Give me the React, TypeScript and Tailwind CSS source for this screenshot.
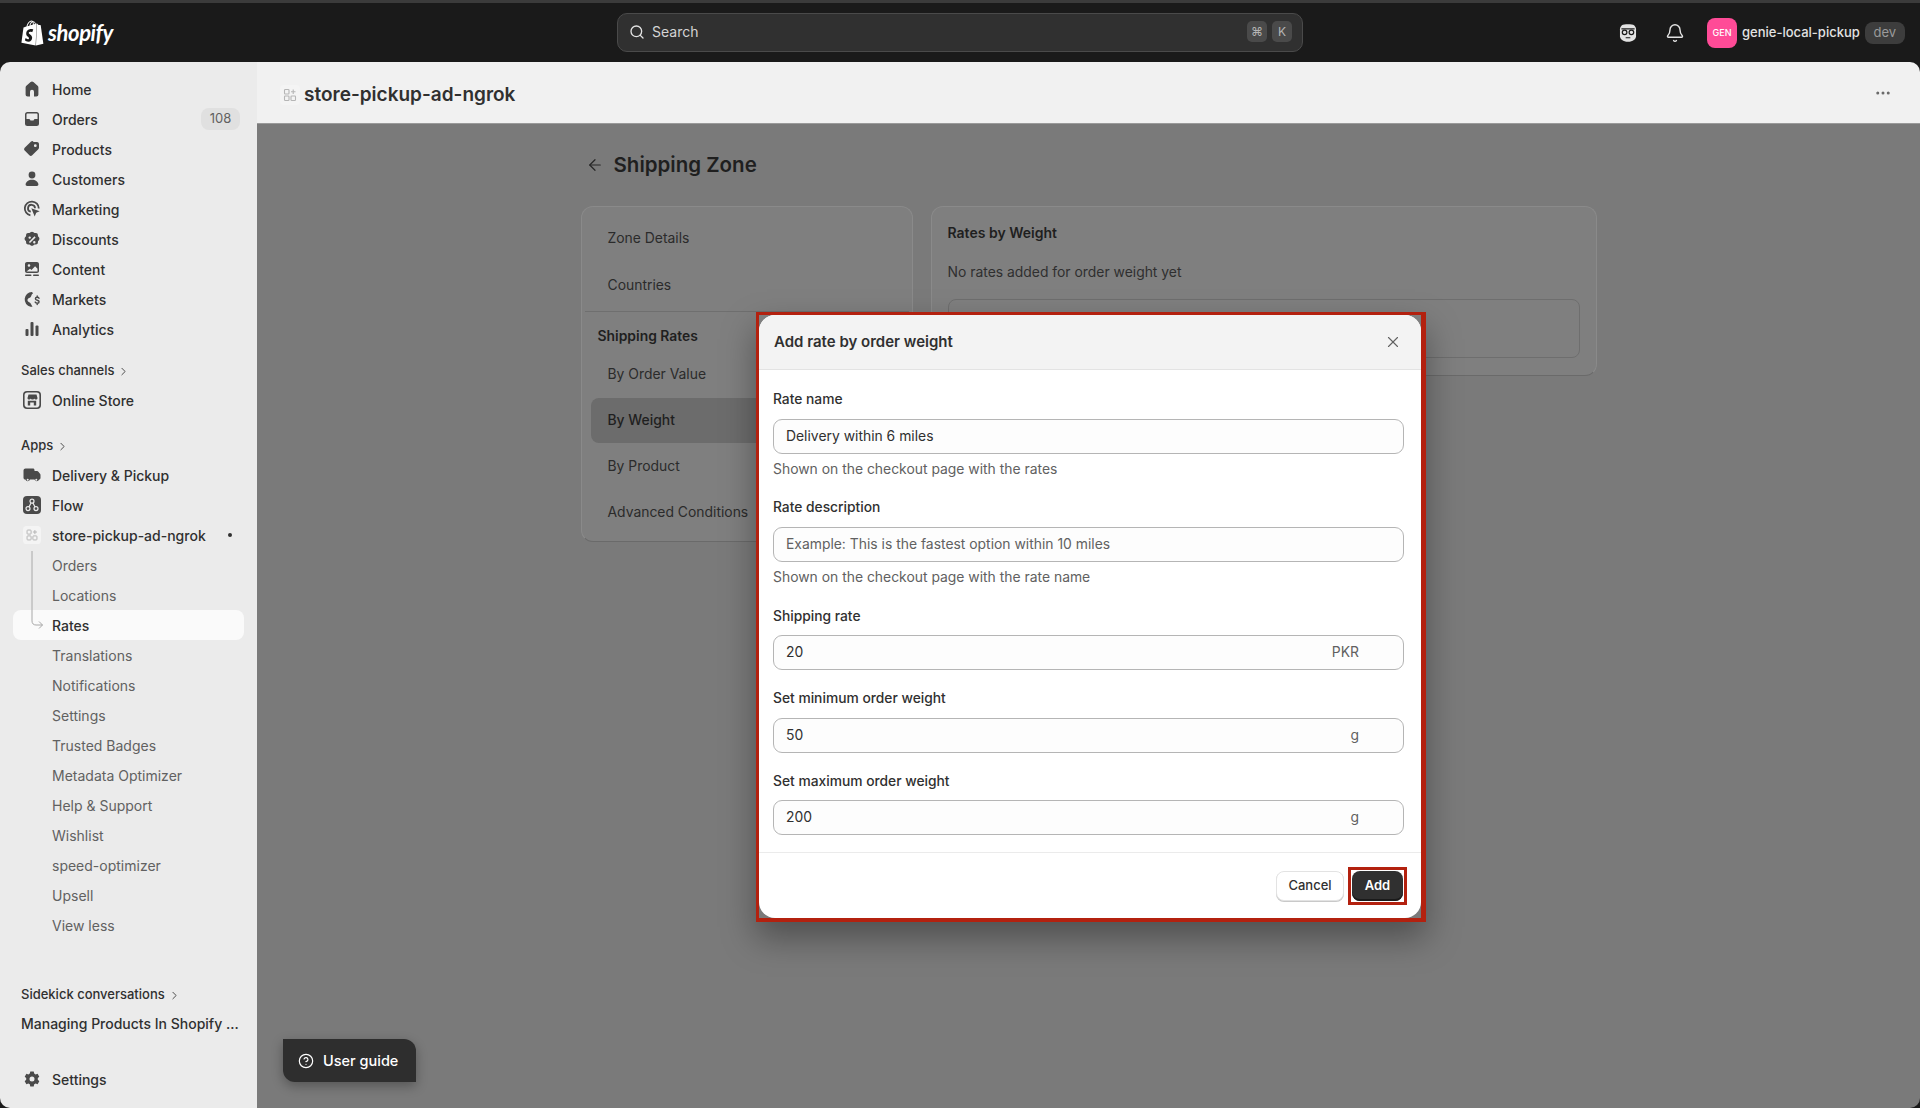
import React from 'react';
import { ArrowLeft, Bell, ChevronRight, CircleHelp, MoreHorizontal, Search, X } from 'lucide-react';
import { SiShopify } from 'react-icons/si';

type IconProps = { className?: string };

const HomeIcon = ({ className }: IconProps) => (
  <svg viewBox="0 0 20 20" fill="currentColor" className={className}>
    <path d="M10 2.600c-.5 0-1 .2-1.400.5L4.400 6.700C3.900 7.100 3.600 7.800 3.600 8.500v6.900c0 1.100.9 2 2 2H8v-4.600a2 2 0 0 1 4 0v4.600h2.400c1.100 0 2-.9 2-2V8.500c0-.7-.3-1.400-.8-1.800l-4.200-3.600c-.4-.3-.9-.5-1.400-.5Z" />
  </svg>
);
const OrdersIcon = ({ className }: IconProps) => (
  <svg viewBox="0 0 20 20" fill="currentColor" className={className}>
    <path fillRule="evenodd" d="M5.500 3h9A2.500 2.500 0 0 1 17 5.500v9a2.500 2.500 0 0 1-2.500 2.500h-9A2.500 2.500 0 0 1 3 14.500v-9A2.500 2.500 0 0 1 5.500 3Zm0 1.500a1 1 0 0 0-1 1V10h2.600c.5 0 .8.3 1 .7l.4.9h3l.4-.9c.2-.4.5-.7 1-.7h2.600V5.500a1 1 0 0 0-1-1h-9Z" />
  </svg>
);
const ProductsIcon = ({ className }: IconProps) => (
  <svg viewBox="0 0 20 20" fill="currentColor" className={className}>
    <path fillRule="evenodd" d="M11.600 3H15c1.100 0 2 .9 2 2v3.400c0 .7-.3 1.300-.7 1.800l-6.100 6.100c-.8.8-2 .8-2.800 0l-4.700-4.700c-.8-.8-.8-2 0-2.800l6.100-6.100c.5-.5 1.100-.7 1.800-.7Zm1.700 5.100a1.400 1.400 0 1 0 0-2.800 1.400 1.400 0 0 0 0 2.800Z" />
  </svg>
);
const CustomersIcon = ({ className }: IconProps) => (
  <svg viewBox="0 0 20 20" fill="currentColor" className={className}>
    <circle cx="10" cy="6" r="3.400" />
    <path d="M10 10.800c-3.400 0-6 1.800-6.400 4.500-.1.900.6 1.700 1.500 1.700h9.800c.9 0 1.600-.8 1.500-1.700-.4-2.700-3-4.500-6.400-4.500Z" />
  </svg>
);
const MarketingIcon = ({ className }: IconProps) => (
  <svg viewBox="0 0 20 20" fill="none" stroke="currentColor" className={className}>
    <path strokeWidth="1.800" d="M8.400 16.400A7 7 0 1 1 16.800 9.500" />
    <path strokeWidth="1.800" d="M8.800 12.700a3.500 3.500 0 1 1 4.200-3.400" />
    <path fill="currentColor" stroke="none" d="M9.300 9.300l8.400 3-3.500 1.500-1.500 3.700-3.400-8.200Z" />
  </svg>
);
const DiscountsIcon = ({ className }: IconProps) => (
  <svg viewBox="0 0 20 20" fill="currentColor" className={className}>
    <path fillRule="evenodd" d="M8.500 2.400c.9-.7 2.100-.7 3 0l1 .8 1.300-.1c1.200-.1 2.100.9 2.100 2l.1 1.300.9 1c.7.900.7 2.100 0 3l-.9 1-.1 1.300c0 1.100-.9 2.100-2.100 2l-1.300-.1-1 .8c-.9.7-2.100.7-3 0l-1-.8-1.300.1c-1.200.1-2.100-.9-2.100-2l-.1-1.300-.9-1c-.7-.9-.7-2.100 0-3l.9-1 .1-1.300c0-1.100.9-2.100 2.100-2l1.300.1 1-.8ZM12.500 6.400l-5.600 5.600 1.100 1.100 5.600-5.600-1.100-1.100ZM7.700 8.900a1.200 1.200 0 1 0 0-2.400 1.200 1.200 0 0 0 0 2.400Zm4.600 4.600a1.200 1.200 0 1 0 0-2.400 1.200 1.200 0 0 0 0 2.400Z" transform="translate(0 .9)" />
  </svg>
);
const ContentIcon = ({ className }: IconProps) => (
  <svg viewBox="0 0 20 20" fill="currentColor" className={className}>
    <path fillRule="evenodd" d="M5 3h10c1.100 0 2 .9 2 2v7c0 1.100-.9 2-2 2H5c-1.100 0-2-.9-2-2V5c0-1.100.9-2 2-2Zm2 2.200a1.300 1.300 0 1 0 0 2.600 1.300 1.300 0 0 0 0-2.600Zm-2.500 7.300h11V9.800l-2.400-2.500-3.600 3.700-1.500-1.300-3.500 2.800Z" />
    <rect x="3" y="15.500" width="6.500" height="1.500" rx=".7" />
    <rect x="11" y="15.500" width="6" height="1.500" rx=".7" />
  </svg>
);
const MarketsIcon = ({ className }: IconProps) => (
  <svg viewBox="0 0 20 20" fill="currentColor" className={className}>
    <path d="M9.800 3a7.500 7.500 0 0 0-1.300 14.800c.6.100 1.300.1 2-.1-.8-1-1.200-2.200-1.800-3.200-.7-1.100-2.300-1.300-3-2.500-.6-1.200.2-2.500 1.300-3 1.200-.6 2-.9 2.300-2.300.2-1 .8-1.900 1.800-2.500-.5-.7-1.500-1.200-1.300-1.200Z" />
    <path fill="none" stroke="currentColor" strokeWidth="1.400" strokeLinecap="round" d="M17 9.300c-.3-.7-1-1-1.800-1-1.100 0-1.800.6-1.800 1.400 0 2 3.700 1 3.700 3 0 .9-.8 1.500-1.900 1.500-.9 0-1.600-.4-2-1.100M15.200 7v1.300M15.200 14.200v1.300" />
  </svg>
);
const AnalyticsIcon = ({ className }: IconProps) => (
  <svg viewBox="0 0 20 20" fill="currentColor" className={className}>
    <rect x="3.500" y="10" width="3" height="7" rx="1" />
    <rect x="8.500" y="3" width="3" height="14" rx="1" />
    <rect x="13.500" y="6.500" width="3" height="10.500" rx="1" />
  </svg>
);
const StoreIcon = ({ className }: IconProps) => (
  <svg viewBox="0 0 20 20" className={className}>
    <rect x="1" y="1" width="18" height="18" rx="4" fill="#4a4a4a" />
    <rect x="2.600" y="2.600" width="14.800" height="14.800" rx="2.800" fill="#ebebeb" />
    <path fill="#4a4a4a" d="M5.500 4.500h9l1 3.500c0 1-.8 1.500-1.600 1.500-.7 0-1.400-.4-1.600-1-.2.6-.9 1-1.800 1s-1.600-.4-1.800-1c-.2.6-.9 1-1.600 1-.8 0-1.600-.5-1.600-1.500l1-3.500ZM5.800 10.800h8.400v4.700h-2.400v-3h-3.600v3H5.800v-4.700Z" />
  </svg>
);
const TruckIcon = ({ className }: IconProps) => (
  <svg viewBox="0 0 20 20" fill="currentColor" className={className}>
    <path fillRule="evenodd" d="M1.500 5.500C1.500 4.400 2.400 3.500 3.500 3.500h7.500c.8 0 1.500.7 1.500 1.500v1H15c.6 0 1.100.3 1.400.8l1.800 2.100c.2.300.3.600.3 1v3.100c0 .8-.6 1.500-1.400 1.500a2.400 2.400 0 0 1-4.600 0H8a2.400 2.400 0 0 1-4.600 0c-1.100 0-1.900-.7-1.900-1.500V5.500Zm4.200 10.300a1 1 0 1 0 0-2 1 1 0 0 0 0 2Zm8.600 0a1 1 0 1 0 0-2 1 1 0 0 0 0 2Z" />
  </svg>
);
const FlowIcon = ({ className }: IconProps) => (
  <svg viewBox="0 0 20 20" className={className}>
    <rect x="1" y="1" width="18" height="18" rx="4" fill="#4a4a4a" />
    <g fill="none" stroke="#ebebeb" strokeWidth="1.200">
      <circle cx="10" cy="6.200" r="2" />
      <circle cx="6" cy="13.600" r="2" />
      <circle cx="14" cy="13.600" r="2" />
      <path d="M9 8 7 11.900M11 8l2 3.900" />
    </g>
  </svg>
);
const AppTile = ({ className }: IconProps) => (
  <svg viewBox="0 0 20 20" className={className}>
    <rect width="20" height="20" rx="4" fill="#f4f4f4" />
    <g fill="none" stroke="#b5b5b5" strokeWidth="1.100">
      <rect x="4.500" y="4.500" width="4.500" height="4.500" rx=".8" />
      <rect x="4.500" y="11" width="4.500" height="4.500" rx=".8" />
      <rect x="11" y="11" width="4.500" height="4.500" rx=".8" />
      <path d="M13.200 4.500v4.500M11 6.700h4.500" />
    </g>
  </svg>
);
const GearIcon = ({ className }: IconProps) => (
  <svg viewBox="0 0 20 20" fill="currentColor" className={className}>
    <path fillRule="evenodd" d="M8.300 2.500h3.400l.5 2.100 1.400.8 2-.7 1.700 3-1.500 1.400v1.700l1.500 1.400-1.700 3-2-.7-1.400.8-.5 2.100H8.300l-.5-2.100-1.400-.8-2 .7-1.700-3 1.500-1.400V9.000L2.700 7.700l1.700-3 2 .7 1.400-.8.500-2.100ZM10 12.400a2.500 2.500 0 1 0 0-5 2.500 2.500 0 0 0 0 5Z" />
  </svg>
);
const SidekickIcon = ({ className }: IconProps) => (
  <svg viewBox="0 0 20 20" className={className}>
    <path fill="#e3e3e3" d="M4.500 3C6 1.800 14 1.800 15.500 3c.9.800 1.800 2 1.800 3.500v6.500c0 2.700-2.800 5-7.300 5s-7.300-2.300-7.300-5V6.500C2.700 5 3.600 3.800 4.500 3Z" />
    <path fill="#1a1a1a" d="M4 5.700h12v1.100H4z" />
    <circle cx="6.900" cy="9.400" r="2.100" fill="#e3e3e3" stroke="#1a1a1a" strokeWidth="1.100" />
    <circle cx="13.100" cy="9.400" r="2.100" fill="#e3e3e3" stroke="#1a1a1a" strokeWidth="1.100" />
    <path d="M8.300 14.300h3.400" stroke="#1a1a1a" strokeWidth="1.100" strokeLinecap="round" />
  </svg>
);

const mainNav = [
  { label: 'Home', icon: HomeIcon },
  { label: 'Orders', icon: OrdersIcon, badge: '108' },
  { label: 'Products', icon: ProductsIcon },
  { label: 'Customers', icon: CustomersIcon },
  { label: 'Marketing', icon: MarketingIcon },
  { label: 'Discounts', icon: DiscountsIcon },
  { label: 'Content', icon: ContentIcon },
  { label: 'Markets', icon: MarketsIcon },
  { label: 'Analytics', icon: AnalyticsIcon },
];

const subNav = [
  'Orders',
  'Locations',
  'Rates',
  'Translations',
  'Notifications',
  'Settings',
  'Trusted Badges',
  'Metadata Optimizer',
  'Help & Support',
  'Wishlist',
  'speed-optimizer',
  'Upsell',
  'View less',
];

const NavRow = ({ label, icon: Icon, badge }: { label: string; icon: React.FC<IconProps>; badge?: string }) => (
  <div className="mx-[13px] flex h-[30px] items-center rounded-lg pl-[9px] pr-[4px] text-[14px] font-medium text-[#303030]">
    <Icon className="mr-[10px] h-[20px] w-[20px] shrink-0 text-[#4a4a4a]" />
    <span>{label}</span>
    {badge && (
      <span className="ml-auto flex h-[22px] w-[39px] items-center justify-center rounded-lg bg-[#e0e0e0] text-[13px] font-normal text-[#616161]">
        {badge}
      </span>
    )}
  </div>
);

const SectionLabel = ({ label, className }: { label: string; className: string }) => (
  <div className={`flex h-[30px] items-center pl-[21px] text-[13px] font-medium text-[#303030] ${className}`}>
    {label}
    <ChevronRight className="ml-[3px] h-[13px] w-[13px] text-[#4a4a4a]" strokeWidth={1.8} />
  </div>
);

const Sidebar = () => (
  <aside className="flex w-[257px] shrink-0 flex-col bg-[#ebebeb] pt-[12px]">
    {mainNav.map((item) => (
      <NavRow key={item.label} {...item} />
    ))}
    <SectionLabel label="Sales channels" className="mt-[10px] pt-[4px]" />
    <div className="mt-px">
      <NavRow label="Online Store" icon={StoreIcon} />
    </div>
    <SectionLabel label="Apps" className="mt-[15px] pt-[2px]" />
    <NavRow label="Delivery & Pickup" icon={TruckIcon} />
    <NavRow label="Flow" icon={FlowIcon} />
    <div className="mx-[13px] flex h-[30px] items-center pl-[10px] text-[14px] font-medium text-[#303030]">
      <AppTile className="mr-[11px] h-[18px] w-[18px] shrink-0" />
      <span>store-pickup-ad-ngrok</span>
      <span className="ml-[22px] h-1 w-1 rounded-full bg-[#303030]" />
    </div>
    <div className="relative">
      <svg viewBox="0 0 14 80" fill="none" className="absolute left-[31px] top-0 h-[80px] w-[14px] text-[#a8a8a8]">
        <path d="M1 1v70c0 2.500 1.500 4 4 4h6.500M8 71.500l3.500 3.500L8 78.500" stroke="currentColor" strokeWidth="1" />
      </svg>
      {subNav.map((label) => (
        <div
          key={label}
          className={
            label === 'Rates'
              ? 'mx-[13px] flex h-[30px] items-center rounded-lg bg-[#fafafa] pl-[39px] text-[14px] font-medium text-[#303030]'
              : 'mx-[13px] flex h-[30px] items-center pl-[39px] text-[14px] text-[#616161]'
          }
        >
          {label}
        </div>
      ))}
    </div>
    <SectionLabel label="Sidekick conversations" className="mt-[38px] pt-[4px]" />
    <div className="flex h-[30px] items-center whitespace-nowrap pl-[21px] text-[14px] font-medium text-[#303030]">
      Managing Products In Shopify ...
    </div>
    <div className="mt-[26px]">
      <NavRow label="Settings" icon={GearIcon} />
    </div>
  </aside>
);

const TopBar = () => (
  <header className="flex h-[62px] shrink-0 items-center border-t-[3px] border-[#3b3b3b] bg-[#1a1a1a] pl-[20px]">
    <div className="flex w-[597px] shrink-0 items-center text-white">
      <SiShopify className="h-[28px] w-[25px]" />
      <span className="ml-[3px] font-['Lato',sans-serif] text-[22px] font-bold italic leading-none tracking-[-0.4px]">shopify</span>
    </div>
    <div className="flex h-[39px] w-[686px] shrink-0 items-center rounded-[10px] border border-[#4a4a4a] bg-[#303030] pb-[2px] pl-[11px] pr-[10px] text-[14px] text-[#d4d4d4]">
      <Search className="mr-[7px] h-[16px] w-[16px] text-[#e3e3e3]" strokeWidth={2} />
      Search
      <span className="ml-auto flex items-center gap-[5px] text-[12px] text-[#b5b5b5]">
        <span className="flex h-[21px] w-[20px] items-center justify-center rounded-[5px] bg-[#4a4a4a]">⌘</span>
        <span className="flex h-[21px] w-[20px] items-center justify-center rounded-[5px] bg-[#4a4a4a]">K</span>
      </span>
    </div>
    <SidekickIcon className="ml-[314px] h-[22px] w-[22px] shrink-0" />
    <Bell className="ml-[26px] h-[20px] w-[20px] shrink-0 text-[#e3e3e3]" strokeWidth={1.7} />
    <div className="ml-[22px] flex h-[30px] w-[30px] shrink-0 items-center justify-center rounded-lg bg-[#ff4b97] text-[9px] font-medium text-white">
      GEN
    </div>
    <span className="ml-[5px] shrink-0 whitespace-nowrap text-[13px] font-medium text-[#e3e3e3]">genie-local-pickup</span>
    <span className="ml-[5px] flex h-[22px] w-[40px] shrink-0 items-center justify-center rounded-lg bg-[#3d3d3d] text-[13px] text-[#9a9a9a]">dev</span>
  </header>
);

const ZoneMenuItem = ({ label, active }: { label: string; active?: boolean }) => (
  <div
    className={
      active
        ? 'mt-px flex h-[45px] items-center rounded-lg bg-[#6c6c6c] pl-[17px] text-[13.9px] font-medium text-[#1f1f1f]'
        : 'flex h-[46px] items-center pl-[17px] text-[13.9px] text-[#2b2b2b]'
    }
  >
    {label}
  </div>
);

const MainContent = () => (
  <main className="flex min-w-0 flex-1 flex-col">
    <div className="flex h-[62px] shrink-0 items-center justify-between border-b border-[#9a9a9a] bg-[#f1f1f1] pl-[23px] pr-[28px]">
      <div className="flex items-center pt-[5px]">
        <AppTile className="h-[20px] w-[20px]" />
        <span className="ml-[4px] text-[19px] font-semibold text-[#303030]">store-pickup-ad-ngrok</span>
      </div>
      <MoreHorizontal className="h-[18px] w-[18px] text-[#6b6b6b]" />
    </div>
    <div className="flex-1 bg-[#7a7a7a]">
      <div className="mx-auto w-[1016px]">
        <div className="flex h-[82px] items-center pl-[5px]">
          <ArrowLeft className="h-[18px] w-[18px] text-[#262626]" strokeWidth={1.6} />
          <h1 className="ml-[10px] text-[20.5px] font-semibold text-[#1f1f1f]">Shipping Zone</h1>
        </div>
        <div className="flex items-start gap-[18px]">
          <div className="w-[332px] rounded-xl border border-[#8a8a8a] border-b-[#6a6a6a] bg-[#7f7f7f] px-[9px] pb-[6px] pt-[8px]">
            <ZoneMenuItem label="Zone Details" />
            <div className="mt-px">
              <ZoneMenuItem label="Countries" />
            </div>
            <div className="mx-[-6px] mt-[3px] border-t border-[#6f6f6f]" />
            <div className="flex h-[39px] items-center pl-[7px] pt-[10px] text-[13.9px] font-semibold text-[#1f1f1f]">Shipping Rates</div>
            <ZoneMenuItem label="By Order Value" />
            <ZoneMenuItem label="By Weight" active />
            <ZoneMenuItem label="By Product" />
            <ZoneMenuItem label="Advanced Conditions" />
          </div>
          <div className="h-[170px] flex-1 rounded-xl border border-[#8a8a8a] border-b-[#6a6a6a] bg-[#7f7f7f] px-[16px] pt-[16px]">
            <h2 className="text-[14px] font-semibold leading-[20px] text-[#1f1f1f]">Rates by Weight</h2>
            <p className="mt-[19px] text-[13.9px] leading-[20px] text-[#2f2f2f]">No rates added for order weight yet</p>
            <div className="mt-[17px] h-[59px] rounded-lg border border-[#6e6e6e]" />
          </div>
        </div>
      </div>
    </div>
  </main>
);

const Field = ({
  label,
  value,
  placeholder,
  unit,
  help,
  labelGap,
  className,
}: {
  label: string;
  value?: string;
  placeholder?: string;
  unit?: string;
  help?: string;
  labelGap: string;
  className?: string;
}) => (
  <div className={className}>
    <label className="block text-[13.8px] font-medium leading-[20px] text-[#303030]">{label}</label>
    <div className={`flex h-[35px] items-center rounded-[9px] border border-[#b5b5b5] bg-[#fdfdfd] pl-[12px] pr-[44px] ${labelGap}`}>
      <input
        readOnly
        value={value ?? ''}
        placeholder={placeholder}
        className="min-w-0 flex-1 bg-transparent text-[13.9px] text-[#303030] outline-none placeholder:text-[#616161]"
      />
      {unit && <span className="text-[13.9px] text-[#616161]">{unit}</span>}
    </div>
    {help && <p className="mt-[5px] text-[13.9px] leading-[20px] text-[#616161]">{help}</p>}
  </div>
);

const RateModal = () => (
  <div className="absolute left-[756px] top-[312px] w-[670px] border-[3px] border-b-[4px] border-r-[5px] border-[#b3210f] shadow-[0_16px_32px_rgba(0,0,0,0.35)]">
    <div className="overflow-hidden rounded-2xl bg-white">
      <div className="flex h-[55px] items-center justify-between border-b border-[#e3e3e3] bg-[#f3f3f3] pl-[15px] pr-[19px]">
        <h3 className="text-[15px] font-semibold text-[#303030]">Add rate by order weight</h3>
        <X className="h-[18px] w-[18px] text-[#616161]" strokeWidth={1.5} />
      </div>
      <div className="pl-[14px] pr-[17px] pt-[19px]">
        <Field label="Rate name" value="Delivery within 6 miles" help="Shown on the checkout page with the rates" labelGap="mt-[10px]" />
        <Field
          className="mt-[18px]"
          label="Rate description"
          placeholder="Example: This is the fastest option within 10 miles"
          help="Shown on the checkout page with the rate name"
          labelGap="mt-[10px]"
        />
        <Field className="mt-[19px]" label="Shipping rate" value="20" unit="PKR" labelGap="mt-[9px]" />
        <Field className="mt-[18px]" label="Set minimum order weight" value="50" unit="g" labelGap="mt-[10px]" />
        <Field className="mt-[18px]" label="Set maximum order weight" value="200" unit="g" labelGap="mt-[9px]" />
      </div>
      <div className="mt-[17px] flex h-[66px] items-center justify-end gap-[4px] border-t border-[#ebebeb] pr-[14px]">
        <button className="h-[30px] w-[68px] rounded-lg border border-[#e3e3e3] bg-white text-[13px] font-medium text-[#303030] shadow-[0_1px_0_#c9c9c9]">
          Cancel
        </button>
        <div className="border-[3px] border-[#b3210f] p-[1px]">
          <button className="block h-[30px] w-[51px] rounded-lg bg-[#303030] text-[13px] font-semibold text-white shadow-[inset_0_-2px_0_#1a1a1a]">
            Add
          </button>
        </div>
      </div>
    </div>
  </div>
);

const UserGuide = () => (
  <div className="absolute left-[283px] top-[1039px] flex h-[43px] w-[133px] items-center rounded-bl-xl rounded-tr-xl bg-[#2e2e2e] pl-[15px] text-[14.5px] font-medium text-white shadow-[0_4px_12px_rgba(0,0,0,0.3)]">
    <CircleHelp className="mr-[9px] h-[16px] w-[16px]" strokeWidth={1.8} />
    User guide
  </div>
);

export default function App() {
  return (
    <div className="relative flex h-[1108px] w-[1920px] flex-col overflow-hidden bg-[#1a1a1a] font-['Inter',sans-serif]">
      <TopBar />
      <div className="flex min-h-0 flex-1 overflow-hidden rounded-[10px]">
        <Sidebar />
        <MainContent />
      </div>
      <RateModal />
      <UserGuide />
    </div>
  );
}
